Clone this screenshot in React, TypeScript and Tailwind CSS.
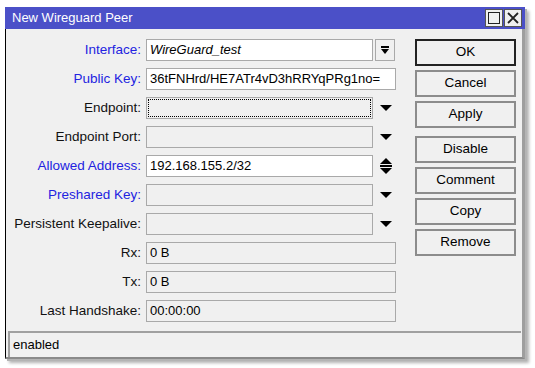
import React from 'react';

const font = { fontFamily: '"Liberation Sans", Arial, sans-serif' };

type Kind = 'combo' | 'text' | 'drop' | 'spin' | 'ro';

interface Row {
  label: string;
  value?: string;
  blue?: boolean;
  kind: Kind;
  white?: boolean;
  italic?: boolean;
  focus?: boolean;
}

const rows: Row[] = [
  { label: 'Interface:', value: 'WireGuard_test', blue: true, kind: 'combo', white: true, italic: true },
  { label: 'Public Key:', value: '36tFNHrd/HE7ATr4vD3hRRYqPRg1no=', blue: true, kind: 'text', white: true },
  { label: 'Endpoint:', kind: 'drop', focus: true },
  { label: 'Endpoint Port:', kind: 'drop' },
  { label: 'Allowed Address:', value: '192.168.155.2/32', blue: true, kind: 'spin', white: true },
  { label: 'Preshared Key:', blue: true, kind: 'drop' },
  { label: 'Persistent Keepalive:', kind: 'drop' },
  { label: 'Rx:', value: '0 B', kind: 'ro' },
  { label: 'Tx:', value: '0 B', kind: 'ro' },
  { label: 'Last Handshake:', value: '00:00:00', kind: 'ro' },
];

const buttons = ['OK', 'Cancel', 'Apply', 'Disable', 'Comment', 'Copy', 'Remove'];

function DownTriangle() {
  return (
    <svg width="12" height="6" viewBox="0 0 12 6">
      <polygon points="0,0 12,0 6,6" fill="#000" />
    </svg>
  );
}

function Field({ row }: { row: Row }) {
  const full = row.kind === 'text' || row.kind === 'ro';
  return (
    <div
      className={`h-[22px] border border-[#a9a9a9] flex items-center ${full ? 'w-[250px]' : 'w-[227px]'} ${
        row.white ? 'bg-white' : 'bg-[#f0f0f0]'
      }`}
    >
      {row.focus ? (
        <div className="m-[1px] h-[18px] w-full border border-dotted border-black" />
      ) : (
        <span className={`pl-[3px] text-[13px] text-black whitespace-nowrap ${row.italic ? 'italic' : ''}`}>
          {row.value}
        </span>
      )}
    </div>
  );
}

function Suffix({ kind }: { kind: Kind }) {
  if (kind === 'combo') {
    return (
      <div className="ml-[2px] w-[20px] h-[22px] border border-[#a9a9a9] bg-[#f0f0f0] flex items-center justify-center">
        <svg width="10" height="10" viewBox="0 0 10 10">
          <rect x="1" y="1" width="8" height="2" fill="#000" />
          <polygon points="1,4 9,4 5,9" fill="#000" />
        </svg>
      </div>
    );
  }
  if (kind === 'drop') {
    return (
      <div className="w-[23px] flex justify-end pr-[4px]">
        <DownTriangle />
      </div>
    );
  }
  if (kind === 'spin') {
    return (
      <div className="w-[23px] flex justify-end pr-[4px]">
        <svg width="12" height="16" viewBox="0 0 12 16">
          <polygon points="6,0 12,6 0,6" fill="#000" />
          <rect x="0" y="7" width="12" height="2" fill="#000" />
          <polygon points="0,10 12,10 6,16" fill="#000" />
        </svg>
      </div>
    );
  }
  return null;
}

export default function App() {
  return (
    <div className="w-[535px] h-[368px] bg-white pt-[7px] pl-[5px]" style={font}>
      <div className="w-[520px] shadow-[2px_2px_0_#b4b4b4,4px_4px_3px_rgba(0,0,0,0.3)]">
        <div className="h-[22px] bg-[#4b50c8] flex items-center justify-between pl-[7px] pr-[3px]">
          <span className="text-white text-[13px]">New Wireguard Peer</span>
          <div className="flex gap-[1px]">
            <div className="w-[18px] h-[18px] bg-[#f0f0f0] border border-[#555] flex items-center justify-center">
              <svg width="12" height="12" viewBox="0 0 12 12">
                <rect x="0.5" y="0.5" width="11" height="11" fill="none" stroke="#222" />
              </svg>
            </div>
            <div className="w-[18px] h-[18px] bg-[#f0f0f0] border border-[#555] flex items-center justify-center">
              <svg width="12" height="12" viewBox="0 0 12 12">
                <path d="M1 1 L11 11 M11 1 L1 11" stroke="#222" strokeWidth="1.8" />
              </svg>
            </div>
          </div>
        </div>
        <div className="bg-[#f0f0f0] border-l border-black border-r-[3px] border-r-[#9e9e9e] border-b-[2px] border-b-[#8a8a8a] pt-[10px]">
          <div className="flex">
            <div className="flex flex-col gap-[7px]">
              {rows.map((r) => (
                <div key={r.label} className="flex items-center h-[22px]">
                  <div
                    className={`w-[135px] text-right text-[13.5px] whitespace-nowrap ${
                      r.blue ? 'text-[#2323e0]' : 'text-[#111]'
                    }`}
                  >
                    {r.label}
                  </div>
                  <div className="ml-[5px] flex items-center">
                    <Field row={r} />
                    <Suffix kind={r.kind} />
                  </div>
                </div>
              ))}
            </div>
            <div className="ml-[19px] flex flex-col gap-[4px]">
              {buttons.map((b) => (
                <div
                  key={b}
                  className={`w-[101px] h-[27px] flex items-center justify-center text-[13.5px] text-black bg-[#f0f0f0] ${
                    b === 'OK' ? 'border-2 border-[#222]' : 'border-2 border-[#8c8c8c]'
                  } ${b === 'Disable' ? 'mt-[4px]' : ''}`}
                >
                  {b}
                </div>
              ))}
            </div>
          </div>
          <div className="mt-[9px] ml-[2px] mr-[1px] h-[26px] border-t-2 border-l-2 border-[#a0a0a0] flex items-center pl-[3px] text-[13px] text-black">
            enabled
          </div>
        </div>
      </div>
    </div>
  );
}
